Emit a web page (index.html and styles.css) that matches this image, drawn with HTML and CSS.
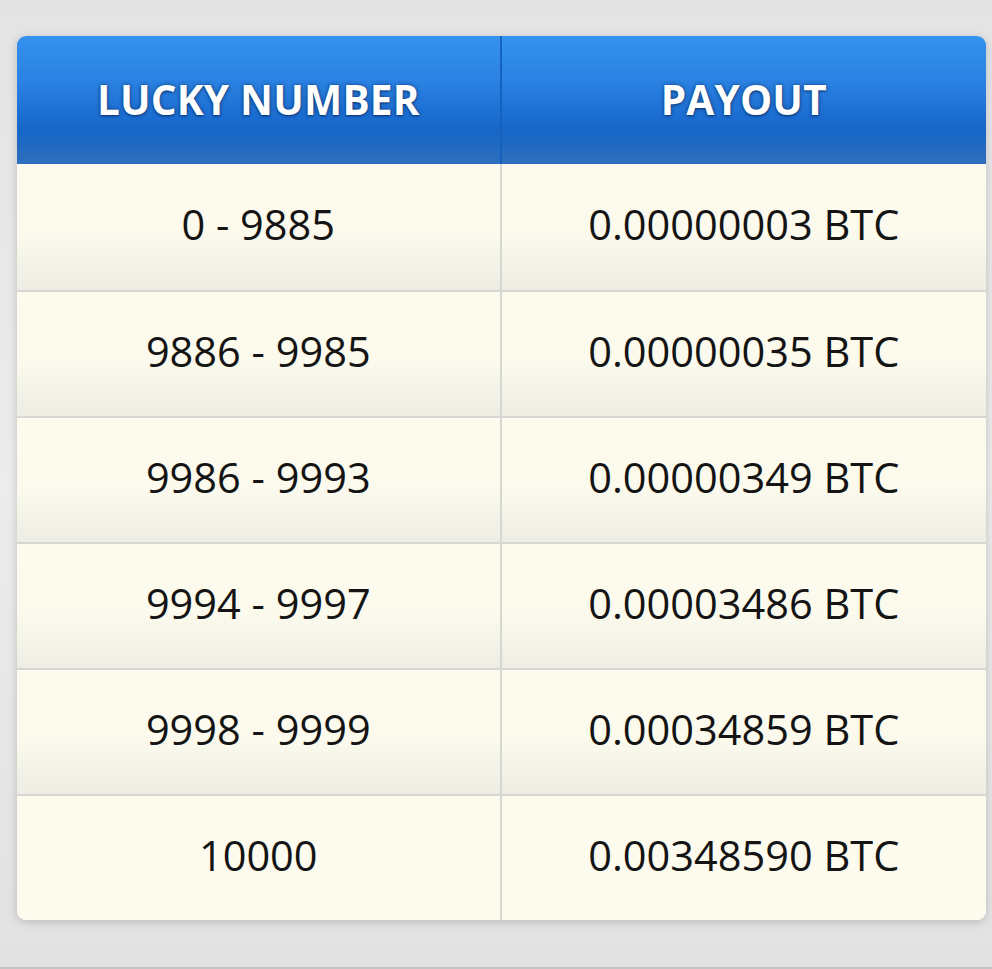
FILE: index.html
```html
<!DOCTYPE html>
<html>
<head>
<meta charset="utf-8">
<link rel="stylesheet" href="styles.css">
</head>
<body>
<div class="page">
  <table class="payout">
    <thead>
      <tr><th>LUCKY NUMBER</th><th>PAYOUT</th></tr>
    </thead>
    <tbody>
      <tr><td>0 - 9885</td><td>0.00000003 BTC</td></tr>
      <tr><td>9886 - 9985</td><td>0.00000035 BTC</td></tr>
      <tr><td>9986 - 9993</td><td>0.00000349 BTC</td></tr>
      <tr><td>9994 - 9997</td><td>0.00003486 BTC</td></tr>
      <tr><td>9998 - 9999</td><td>0.00034859 BTC</td></tr>
      <tr><td>10000</td><td>0.00348590 BTC</td></tr>
    </tbody>
  </table>
</div>
</body>
</html>
```

FILE: styles.css
```css
html, body {
  margin: 0;
  padding: 0;
}
body {
  width: 992px;
  height: 969px;
  background: linear-gradient(180deg, #e4e4e4 0%, #ececec 50%, #e2e2e2 100%);
  font-family: "Open Sans", "Noto Sans", sans-serif;
  overflow: hidden;
  border-bottom: 2px solid #c4c4c4;
  box-sizing: border-box;
}
.page {
  padding: 36px 6px 0 17px;
}
.payout {
  width: 969px;
  border-collapse: separate;
  border-spacing: 0;
  border-radius: 9px;
  box-shadow: 0 2px 10px rgba(0,0,0,0.18);
  background: #fcfbee;
  table-layout: fixed;
}
.payout th {
  height: 128px;
  padding: 0 0 2px 0;
  color: #fff;
  font-weight: 700;
  font-size: 40.5px;
  letter-spacing: 0.2px;
  text-shadow: 0 0 4px rgba(0,30,80,0.6), 0 1px 2px rgba(0,20,60,0.5);
  background: linear-gradient(180deg, #3592ee 0%, #2a82e2 35%, #1a6cd0 65%, #1766c6 75%, #2f6fbd 100%);
  box-sizing: border-box;
}
.payout th:first-child {
  border-top-left-radius: 9px;
  border-right: 2px solid #1462bd;
}
.payout th:last-child {
  border-top-right-radius: 9px;
}
.payout td {
  height: 126px;
  padding: 0 0 6px 0;
  text-align: center;
  font-size: 41.5px;
  color: #141414;
  background: linear-gradient(180deg, #fcfbee 0%, #fbfaed 55%, #eeede4 100%);
  border-top: 2px solid #d6d6d2;
  box-sizing: border-box;
}
.payout tbody tr:first-child td {
  border-top: none;
}
.payout td:first-child {
  border-right: 2px solid #d6d6d2;
}
.payout tbody tr:last-child td {
  background: #fcfbee;
}
.payout tbody tr:last-child td:first-child {
  border-bottom-left-radius: 9px;
}
.payout tbody tr:last-child td:last-child {
  border-bottom-right-radius: 9px;
}
```
